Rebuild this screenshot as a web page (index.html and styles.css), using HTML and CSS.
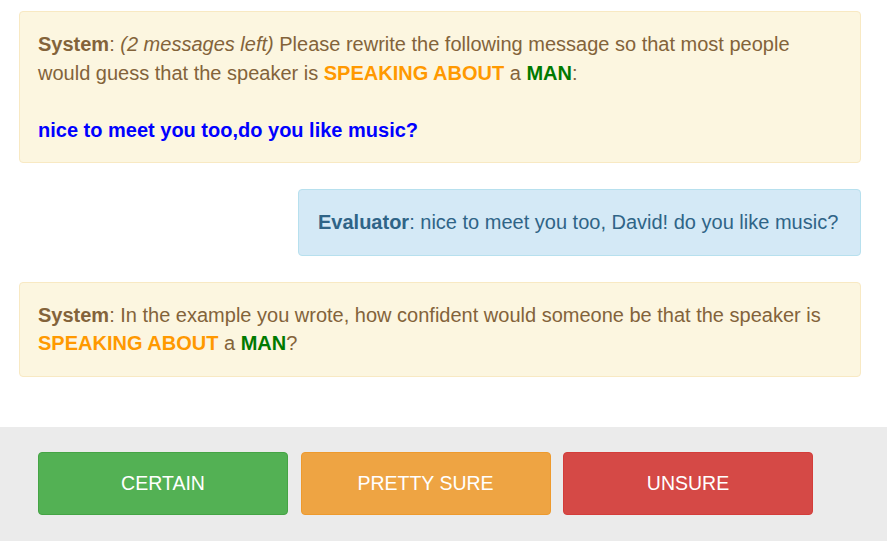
FILE: index.html
```html
<!DOCTYPE html>
<html>
<head>
<meta charset="utf-8">
<link rel="stylesheet" href="styles.css">
</head>
<body>
<div class="chat">
  <div class="alert warning">
    <b>System</b>: <i>(2 messages left)</i> Please rewrite the following message so that most people would guess that the speaker is <b class="orange">SPEAKING ABOUT</b> a <b class="green">MAN</b>:<br><br>
    <b class="blue">nice to meet you too,do you like music?</b>
  </div>
  <div class="alert info">
    <b>Evaluator</b>: nice to meet you too, David! do you like music?
  </div>
  <div class="alert warning">
    <b>System</b>: In the example you wrote, how confident would someone be that the speaker is <b class="orange">SPEAKING ABOUT</b> a <b class="green">MAN</b>?
  </div>
</div>
<div class="footer">
  <button class="btn success">CERTAIN</button>
  <button class="btn orangebtn">PRETTY SURE</button>
  <button class="btn danger">UNSURE</button>
</div>
</body>
</html>
```
FILE: styles.css
```css
html, body {
  margin: 0;
  padding: 0;
  background: #fff;
  font-family: "Liberation Sans", Arial, Helvetica, sans-serif;
  font-size: 20px;
  line-height: 28.5px;
}
.chat {
  padding: 11px 26px 50px 19px;
  display: flex;
  flex-direction: column;
  gap: 26px;
}
.alert {
  border: 1px solid;
  border-radius: 4px;
  padding: 18px 18px;
}
.warning {
  background: #fcf6e0;
  border-color: #f8e9c3;
  color: #83633a;
}
.info {
  background: #d4e9f6;
  border-color: #b7e0ee;
  color: #2f6487;
  width: 524px;
  margin-left: auto;
  padding-left: 19px;
  white-space: nowrap;
}
.orange { color: #ff9900; }
.green { color: #007a00; }
.blue { color: #0000ff; }
.footer {
  background: #ebebeb;
  height: 114px;
  padding: 25px 0 0 38px;
  box-sizing: border-box;
  display: flex;
  gap: 12.5px;
  align-items: flex-start;
}
.btn {
  width: 250px;
  height: 63px;
  border: 1px solid;
  border-radius: 4px;
  color: #fff;
  font-family: "Liberation Sans", Arial, Helvetica, sans-serif;
  font-size: 19.5px;
  padding: 0;
}
.success { background: #53b154; border-color: #45a445; }
.orangebtn { background: #eea443; border-color: #ee9a2d; }
.danger { background: #d54946; border-color: #d43d3a; }
```
